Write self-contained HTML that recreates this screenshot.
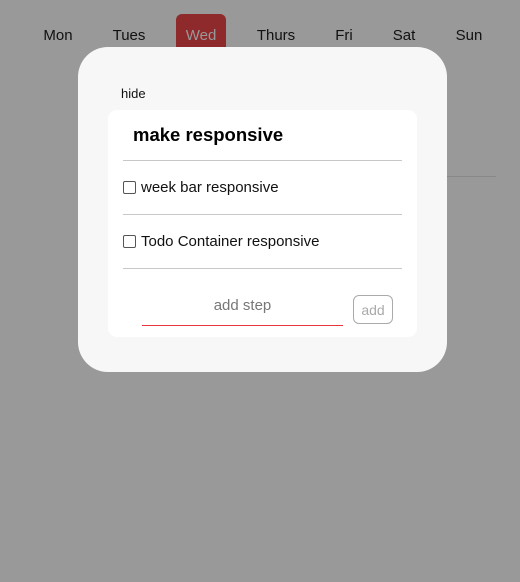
<!DOCTYPE html>
<html><head><style>
body{margin:0;width:520px;height:582px;background:#999;font-family:"Liberation Sans",sans-serif;position:relative;overflow:hidden}
.d{position:absolute;top:27px;font-size:15px;color:#111;transform:translateX(-50%)}
.wed{position:absolute;left:176px;top:14px;width:50px;height:40px;background:#8e2a2b;border-radius:6px}
.modal{position:absolute;left:78px;top:47px;width:369px;height:325px;background:#f7f7f7;border-radius:30px}
.card{position:absolute;left:108px;top:110px;width:309px;height:227px;background:#fff;border-radius:9px}
.t{position:absolute;color:#111}
.ln{position:absolute;left:123px;width:279px;height:1px;background:#c8c8c8}
.cb{position:absolute;left:123px;width:11px;height:11px;border:1px solid #555;border-radius:2px;background:#fff}
</style></head><body>
<div style="position:absolute;left:350px;top:176px;width:146px;height:1px;background:#888"></div>
<div class="wed"></div>
<div class="d" style="left:58px">Mon</div>
<div class="d" style="left:129px">Tues</div>
<div class="d" style="left:201px;color:#999">Wed</div>
<div class="d" style="left:276px">Thurs</div>
<div class="d" style="left:344px">Fri</div>
<div class="d" style="left:404px">Sat</div>
<div class="d" style="left:469px">Sun</div>
<div class="modal"></div>
<div class="t" style="left:121px;top:86px;font-size:13px">hide</div>
<div class="card"></div>
<div class="t" style="left:133px;top:124px;font-size:18.5px;font-weight:bold;color:#000">make responsive</div>
<div class="ln" style="top:160px"></div>
<div class="cb" style="top:181px"></div>
<div class="t" style="left:141px;top:179px;font-size:15px">week bar responsive</div>
<div class="ln" style="top:214px"></div>
<div class="cb" style="top:235px"></div>
<div class="t" style="left:141px;top:233px;font-size:15px">Todo Container responsive</div>
<div class="ln" style="top:268px"></div>
<div class="t" style="left:142px;width:201px;text-align:center;top:297px;font-size:15px;color:#777">add step</div>
<div style="position:absolute;left:142px;top:325px;width:201px;height:1px;background:#e8383d"></div>
<div style="position:absolute;left:353px;top:295px;width:38px;height:27px;border:1px solid #aaa;border-radius:6px;color:#aaa;font-size:14px;text-align:center;line-height:29px">add</div>
</body></html>
